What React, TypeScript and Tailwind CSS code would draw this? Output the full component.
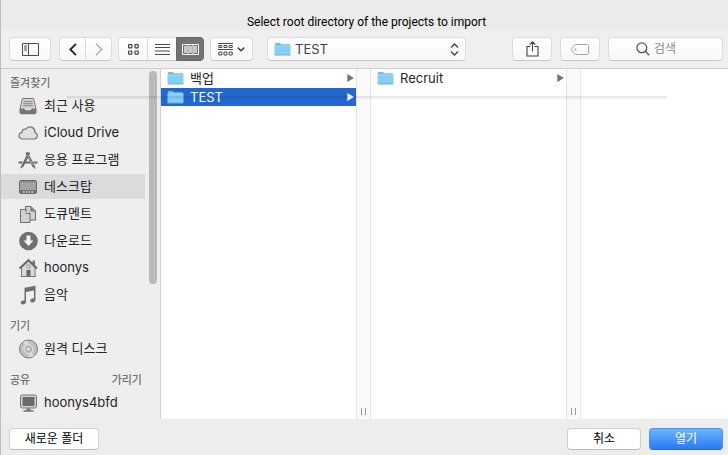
import React from 'react';

const FolderIcon: React.FC = () => (
  <svg width="17" height="14" viewBox="0 0 17 14" className="shrink-0">
    <path d="M1 2.2C1 1.5 1.4 1 2 1h3.600c.5 0 .8.3 1 .7l.4.6h8c.6 0 1 .4 1 1V12.5H1z" fill="#6fbfe8" />
    <path d="M.5 4h16v8.4c0 .3-.2.6-.6.6H1.100c-.4 0-.6-.3-.6-.6z" fill="#86cef6" />
    <path d="M.5 4h16" stroke="#a5dbf9" />
    <path d="M.8 13h15.4" stroke="#62b2dd" />
  </svg>
);

const RecentsIcon = () => (
  <svg width="20" height="20" viewBox="0 0 20 20" fill="none">
    <path d="M4.5 2.5h11L18 13v4H2v-4z" fill="#dedede" stroke="#757575" />
    <path d="M5.600 4h8.800l1 7.500H4.600z" fill="#c2c2c2" />
    <path d="M5.600 5.500h8.800M5.300 7.500h9.400M5 9.500h10" stroke="#999" />
    <path d="M2 12.500h4.200l1.300 1.800h5l1.300-1.800H18V17c0 .8-.4 1.200-1.200 1.200H3.200C2.400 18.200 2 17.800 2 17z" fill="#757575" />
  </svg>
);

const CloudIcon = () => (
  <svg width="20" height="20" viewBox="0 0 20 20" fill="none">
    <path
      d="M4.500 16h11.700a3.300 3.300 0 0 0 .5-6.500 4.800 4.800 0 0 0-8.900-3.200 2.700 2.700 0 0 0-3.700 3.100A3.300 3.300 0 0 0 4.500 16z"
      fill="#e2e2e2"
      stroke="#747474"
      strokeWidth="1.2"
    />
  </svg>
);

const ApplicationsIcon = () => (
  <svg width="20" height="20" viewBox="0 0 20 20" fill="none" stroke="#696969">
    <path d="M10.5 4 4 17" strokeWidth="2.2" />
    <path d="M8.500 2.500 16 17" strokeWidth="2.6" />
    <path d="M4.300 15.500 2.800 18.300M15.300 15.500l1.900 3" strokeWidth="1.2" />
    <path d="M.5 12.500h4M6.500 12.500h6M15.500 12.500h4" strokeWidth="2" />
    <path d="M11.500 2.500 10.500 4" strokeWidth="2" />
    <path d="m9.500 4.800 5.500 10.700" stroke="#c4c4c4" strokeWidth=".7" />
  </svg>
);

const DesktopIcon = () => (
  <svg width="20" height="20" viewBox="0 0 20 20" fill="none">
    <rect x="1.500" y="3.500" width="17" height="13" rx="1.500" fill="#a4a4a4" stroke="#6a6a6a" />
    <path d="M2 4.800h16" stroke="#808080" />
    <path d="M2 13h16v3H2z" fill="#727272" />
    <path d="M5.200 15h1.300M8 15h1.300M10.800 15h1.300M13.600 15h1.300" stroke="#ececec" strokeWidth="1.300" />
  </svg>
);

const DocumentsIcon = () => (
  <svg width="20" height="20" viewBox="0 0 20 20" fill="#d2d2d2" stroke="#6c6c6c">
    <path d="M7.500 2.500H13L17.500 7v9h-10z" />
    <path d="M13 2.500V7h4.500" fill="#8e8e8e" />
    <path d="M2.500 5.500H8l4 4v9H2.500z" />
    <path d="M8 5.500v4h4" fill="#f2f2f2" />
  </svg>
);

const DownloadsIcon = () => (
  <svg width="20" height="20" viewBox="0 0 20 20">
    <circle cx="10.500" cy="10" r="9.300" fill="#707070" />
    <path d="M8.500 4.500h4v5h3l-5 5.500-5-5.500h3z" fill="#f4f4f4" />
  </svg>
);

const HomeIcon = () => (
  <svg width="20" height="20" viewBox="0 0 20 20" fill="none">
    <path d="M14.500 2.500H17v5l-2.500-2z" fill="#777" />
    <path d="M3.500 9.500 10.500 3l6.500 6.500v9H3.500z" fill="#dadada" stroke="#777" />
    <path d="m1.500 10.500 9-8.500 8.500 8.500" stroke="#666" strokeWidth="1.800" />
    <rect x="9" y="7" width="3" height="3" fill="#eee" stroke="#888" strokeWidth=".8" />
    <path d="M8.500 12h4v6.500h-4z" fill="#666" />
    <path d="M2.500 18.500H18" stroke="#777" />
  </svg>
);

const MusicIcon = () => (
  <svg width="20" height="20" viewBox="0 0 20 20">
    <path
      d="M6.500 2.800 17.500.8v13.400c0 1.900-1.200 3-3 3.200-1.400.1-2.300-.6-2.300-1.700 0-1.500 1.400-2.400 3.800-2.500V5.400L8 6.900v9.300c0 1.900-1.200 3-3 3.200-1.400.1-2.300-.6-2.300-1.700 0-1.500 1.400-2.400 3.800-2.500z"
      fill="#6e6e6e"
    />
  </svg>
);

const DiscIcon = () => (
  <svg width="20" height="20" viewBox="0 0 20 20" fill="none">
    <circle cx="10.500" cy="10" r="9" fill="#bfbfbf" stroke="#7a7a7a" />
    <path d="M10.500 10 5 3.500A8.300 8.300 0 0 1 10 1.700zM10.500 10l5.500 6.500a8.300 8.300 0 0 1-5 1.800z" fill="#dcdcdc" />
    <circle cx="10.500" cy="10" r="4.500" fill="#bcbcbc" stroke="#eaeaea" />
    <circle cx="10.500" cy="10" r="2" fill="#eee" stroke="#999" strokeWidth=".8" />
  </svg>
);

const ComputerIcon = () => (
  <svg width="20" height="20" viewBox="0 0 20 20" fill="none">
    <rect x="2.500" y="2" width="16" height="13" rx="1.800" fill="#d4d4d4" stroke="#747474" />
    <rect x="4.500" y="4" width="12" height="9" fill="#6a6a6a" />
    <path d="M8.500 15.500h4v2h-4z" fill="#777" />
    <path d="M5.500 18h10" stroke="#666" strokeWidth="1.400" />
  </svg>
);

interface SidebarItem {
  label: string;
  icon: React.ReactNode;
  active?: boolean;
}

interface SidebarSection {
  title: string;
  action?: string;
  items: SidebarItem[];
}

const sections: SidebarSection[] = [
  {
    title: '즐겨찾기',
    items: [
      { label: '최근 사용', icon: <RecentsIcon /> },
      { label: 'iCloud Drive', icon: <CloudIcon /> },
      { label: '응용 프로그램', icon: <ApplicationsIcon /> },
      { label: '데스크탑', icon: <DesktopIcon />, active: true },
      { label: '도큐멘트', icon: <DocumentsIcon /> },
      { label: '다운로드', icon: <DownloadsIcon /> },
      { label: 'hoonys', icon: <HomeIcon /> },
      { label: '음악', icon: <MusicIcon /> },
    ],
  },
  { title: '기기', items: [{ label: '원격 디스크', icon: <DiscIcon /> }] },
  { title: '공유', action: '가리기', items: [{ label: 'hoonys4bfd', icon: <ComputerIcon /> }] },
];

const toolButton =
  'flex h-6 items-center justify-center bg-gradient-to-b from-white to-[#f7f7f7] border border-[#dcdcdc] border-b-[#c8c8c8]';

const Toolbar: React.FC = () => (
  <div className="flex items-center pt-[7px] pb-[7px] pl-2 pr-[5px] border-b border-[#cfcfcf] bg-[#efefef]">
    <button aria-label="Sidebar" className={`${toolButton} w-[42px] rounded`}>
      <svg width="17" height="13" viewBox="0 0 17 13" fill="none" stroke="#4c4c4c">
        <path d="M.5.5h16v12H.5zM6.500.5v12M2 3h3M2 5h3M2 7h3" />
      </svg>
    </button>

    <div className="ml-2 flex">
      <button aria-label="Back" className={`${toolButton} w-[27px] rounded-l`}>
        <svg width="8" height="13" viewBox="0 0 8 13" fill="none" stroke="#222" strokeWidth="1.800">
          <path d="M7 .8 1.300 6.500 7 12.200" />
        </svg>
      </button>
      <button aria-label="Forward" className={`${toolButton} w-[26px] rounded-r border-l-0`}>
        <svg width="8" height="13" viewBox="0 0 8 13" fill="none" stroke="#b0b0b0" strokeWidth="1.500">
          <path d="m1 .8 5.700 5.700L1 12.200" />
        </svg>
      </button>
    </div>

    <div className="ml-[6px] flex">
      <button aria-label="Icons" className={`${toolButton} w-[30px] rounded-l`}>
        <svg width="11" height="11" viewBox="0 0 11 11" fill="none" stroke="#444" strokeWidth="1.200">
          <rect x=".6" y=".6" width="3.200" height="3.200" rx=".6" />
          <rect x="7" y=".6" width="3.200" height="3.200" rx=".6" />
          <rect x=".6" y="7" width="3.200" height="3.200" rx=".6" />
          <rect x="7" y="7" width="3.200" height="3.200" rx=".6" />
        </svg>
      </button>
      <button aria-label="List" className={`${toolButton} w-7 border-x-0`}>
        <svg width="15" height="11" viewBox="0 0 15 11" stroke="#4c4c4c">
          <path d="M0 .5h15M0 3.500h15M0 7h15M0 10.500h15" />
        </svg>
      </button>
      <button
        aria-label="Columns"
        className="flex h-6 w-7 items-center justify-center rounded-r bg-[#727272] border border-[#686868]"
      >
        <svg width="17" height="11" viewBox="0 0 17 11" className="shrink-0" fill="none" stroke="#f5f5f5">
          <path d="M.5.5h16v10H.5z" />
          <path d="M2 2h3.300v7H2zM6.800 2h3.300v7H6.800zM11.700 2H15v7h-3.300z" fill="#c9c9c9" stroke="none" />
          <path d="M6 1v9M11 1v9" />
        </svg>
      </button>
    </div>

    <button aria-label="Group" className={`${toolButton} ml-[6px] w-[43px] gap-1 rounded`}>
      <svg width="15" height="13" viewBox="0 0 15 13" fill="none" stroke="#4c4c4c">
        <path d="M0 .5h15M0 6.500h15" />
        <path d="M.8 2.500h3v2h-3zM6 2.500h3v2H6zM11.200 2.500h3v2h-3zM.8 9h3v3h-3zM6 9h3v3H6zM11.200 9h3v3h-3z" />
      </svg>
      <svg width="8" height="5" viewBox="0 0 8 5" fill="none" stroke="#444" strokeWidth="1.500">
        <path d="m.8.6 3.200 3.200L7.200.6" />
      </svg>
    </button>

    <label className={`${toolButton} ml-[14px] w-[199px] gap-1 rounded px-[6px]`}>
      <FolderIcon />
      <select
        aria-label="Location"
        className="min-w-0 flex-1 appearance-none bg-transparent text-[13px] leading-5 text-[#444] outline-none"
      >
        <option>TEST</option>
      </select>
      <svg width="9" height="13" viewBox="0 0 9 13" fill="none" stroke="#444" strokeWidth="1.400">
        <path d="m1 4.500 3.500-3.500L8 4.500M1 8.500 4.500 12 8 8.500" />
      </svg>
    </label>

    <div className="ml-auto flex gap-2">
      <button aria-label="Share" className={`${toolButton} w-10 rounded`}>
        <svg width="13" height="16" viewBox="0 0 13 16" fill="none" stroke="#444" strokeWidth="1.100">
          <path d="M4.500 5.500H1V15h11V5.500H8.500M6.500 10.500V1M3.700 3.700 6.500.9l2.800 2.800" />
        </svg>
      </button>
      <button aria-label="Tags" className={`${toolButton} w-10 rounded`}>
        <svg width="18" height="11" viewBox="0 0 18 11" fill="none" stroke="#a6a6a6">
          <path d="M5 .5h11c.8 0 1.500.7 1.500 1.500v7c0 .8-.7 1.500-1.500 1.500H5C3.500 10.500.5 7 .5 5.500S3.500.5 5 .5z" />
          <circle cx="4.300" cy="5.500" r=".8" />
        </svg>
      </button>
      <label className={`${toolButton} w-[115px] gap-1 rounded pl-[27px]`}>
        <svg width="14" height="14" viewBox="0 0 14 14" className="shrink-0" fill="none" stroke="#555" strokeWidth="1.300">
          <circle cx="5.800" cy="5.800" r="4.900" />
          <path d="m9.300 9.300 4 4" />
        </svg>
        <input
          type="search"
          aria-label="검색"
          placeholder="검색"
          className="min-w-0 flex-1 bg-transparent text-xs text-[#444] placeholder:text-[#8e8e8e] outline-none"
        />
      </label>
    </div>
  </div>
);

const Sidebar: React.FC = () => (
  <aside className="flex w-40 shrink-0 overflow-hidden border-r border-[#d2d2d2] bg-[#eee]">
    <nav className="w-36 shrink-0 space-y-[9px] pt-1">
      {sections.map((section) => (
        <section key={section.title}>
          <div className="flex h-5 items-center justify-between pl-[9px] pr-[3px] text-[11px] font-medium text-[#707070]">
            <h2>{section.title}</h2>
            {section.action && <button>{section.action}</button>}
          </div>
          <div className="space-y-[2px]">
            {section.items.map((item) => (
              <button
                key={item.label}
                className={`flex h-[25px] w-full items-center gap-[6px] whitespace-nowrap pl-[17px] text-[13px] text-[#242424] ${
                  item.active ? 'bg-[#dadbdc]' : ''
                }`}
              >
                {item.icon}
                {item.label}
              </button>
            ))}
          </div>
        </section>
      ))}
    </nav>
    <div className="flex-1 pl-1 pt-[2px]">
      <div className="h-[213px] w-2 rounded-full bg-[#b9b9b9]"></div>
    </div>
  </aside>
);

interface ColumnProps {
  items: { name: string; selected?: boolean }[];
}

const Column: React.FC<ColumnProps> = ({ items }) => (
  <>
    <div className="w-[195px] shrink-0 space-y-px">
      {items.map((item) => (
        <button
          key={item.name}
          className={`flex h-[18px] w-full items-center gap-[6px] pl-[6px] pr-[2px] text-left text-[13px] leading-[18px] ${
            item.selected ? 'bg-[#2467d1] text-white' : 'text-[#1f1f1f]'
          }`}
        >
          <FolderIcon />
          <span className="flex-1">{item.name}</span>
          <svg width="7" height="8" viewBox="0 0 7 8" fill={item.selected ? '#fff' : '#747474'}>
            <path d="M.3 0 7 4 .3 8z" />
          </svg>
        </button>
      ))}
    </div>
    <div className="flex w-[15px] shrink-0 items-end justify-center gap-[3px] border-x border-[#e4e4e4] bg-[#fafafa] pb-1">
      <span className="h-[7px] w-px bg-[#999]"></span>
      <span className="h-[7px] w-px bg-[#999]"></span>
    </div>
  </>
);

export default function App() {
  return (
    <div className="relative flex h-screen flex-col overflow-hidden border-l border-[#bdbdbd] bg-[#ededed] font-[Inter,'Noto_Sans_CJK_KR',sans-serif]">
      <h1 className="h-[30px] bg-[#ebebeb] pt-[15px] pl-1 text-center font-[Roboto,sans-serif] text-xs leading-[15px] text-black">
        Select root directory of the projects to import
      </h1>
      <Toolbar />

      <main className="flex min-h-0 flex-1 bg-white">
        <Sidebar />
        <Column items={[{ name: '백업' }, { name: 'TEST', selected: true }]} />
        <Column items={[{ name: 'Recruit' }]} />
        <div className="flex-1"></div>
      </main>

      <footer className="flex items-center gap-2 pt-[9px] pb-[5px] pl-2 pr-[5px] text-xs">
        <button className="h-[22px] w-[90px] rounded border border-[#d0d0d0] border-b-[#bcbcbc] bg-white text-black">
          새로운 폴더
        </button>
        <button className="ml-auto h-[22px] w-[74px] rounded border border-[#d0d0d0] border-b-[#bcbcbc] bg-white text-black">
          취소
        </button>
        <button className="h-[22px] w-[74px] rounded border border-[#4a93ee] border-b-[#2a6be0] bg-gradient-to-b from-[#6db3f8] to-[#2779f6] text-white">
          열기
        </button>
      </footer>

      {/* sheet shadow */}
      <div className="pointer-events-none absolute top-24 left-[66px] right-[61px] h-[3px] bg-gradient-to-b from-black/10 to-black/5"></div>
    </div>
  );
}
